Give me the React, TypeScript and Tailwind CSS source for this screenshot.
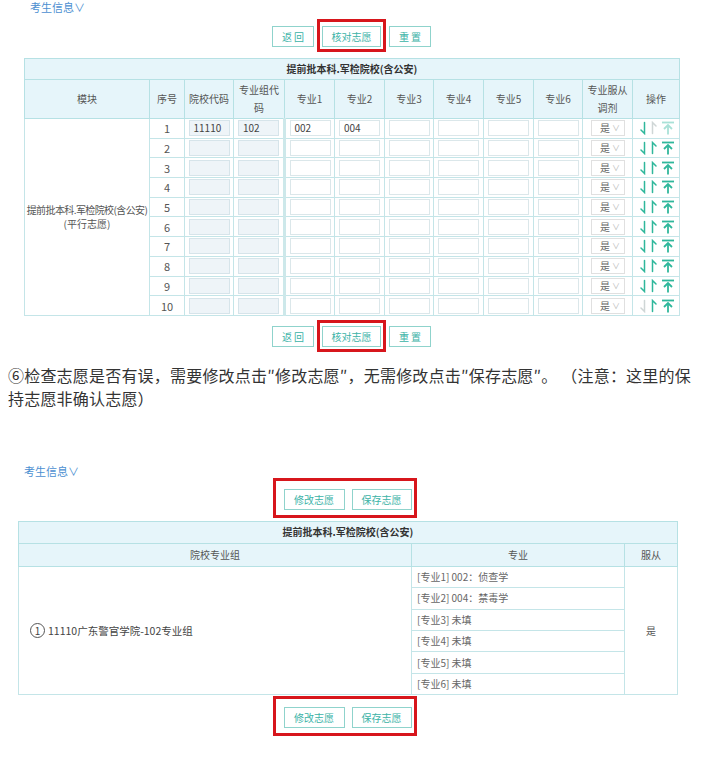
import React from "react";

const FONT = '"Noto Sans CJK SC", "Noto Sans", sans-serif';

function Btn({ w, children }: { w: string; children: React.ReactNode }) {
  return (
    <div
      className={`${w} h-[21px] border border-[#8fd3cc] bg-white text-[10px] leading-[19px] text-[#3bb3a7] text-center`}
    >
      {children}
    </div>
  );
}

function Highlight({ children, cls }: { children: React.ReactNode; cls: string }) {
  return (
    <div className="relative flex gap-[7px]">
      {children}
      <span className={`absolute ${cls} border-[3px] border-[#d7161c] pointer-events-none`} />
    </div>
  );
}

function DownIcon({ c }: { c: string }) {
  return (
    <svg width="8" height="14" viewBox="0 0 8 14" fill="none" stroke={c} strokeWidth="1.5" strokeLinecap="round">
      <path d="M5.5 1.5V12.5L2 9" />
    </svg>
  );
}

function UpIcon({ c }: { c: string }) {
  return (
    <svg width="8" height="14" viewBox="0 0 8 14" fill="none" stroke={c} strokeWidth="1.5" strokeLinecap="round">
      <path d="M2.5 12.5V1.5L6 5" />
    </svg>
  );
}

function TopIcon({ c }: { c: string }) {
  return (
    <svg width="14" height="14" viewBox="0 0 14 14" fill="none" stroke={c} strokeWidth="1.8">
      <path d="M1 1.5H13" />
      <path d="M7 13.5V4" />
      <path d="M3 8L7 4L11 8" />
    </svg>
  );
}

const GREEN = "#2fb79b";
const GREY = "#cfd6d6";
const PALE = "#a9e1d7";

function Box({ grey, value }: { grey?: boolean; value?: string }) {
  return (
    <div
      className={`mx-auto w-[41px] h-[16px] border ${
        grey ? "bg-[#eef4f8] border-[#d6e4ea]" : "bg-white border-[#dbe7ea]"
      } text-[10px] leading-[14px] text-[#444] pl-[4px] text-left`}
    >
      {value}
    </div>
  );
}

const TH = "border border-[#b6e1e4] text-[10px] text-[#555] font-normal leading-[18px]";
const TD = "border border-[#c4e5e8] p-0 align-middle";

function FirstTable() {
  const rows = Array.from({ length: 10 }, (_, i) => i + 1);
  const widths = [125, 35, 49, 51, 50, 50, 49, 50, 50, 49, 50, 47];
  return (
    <table className="table-fixed border-collapse w-[655px] border border-[#97d7d4]">
      <colgroup>
        {widths.map((w, i) => (
          <col key={i} style={{ width: w }} />
        ))}
      </colgroup>
      <thead>
        <tr className="h-[21px] bg-[#e6f5fa]">
          <th colSpan={12} className="border border-[#b6e1e4] text-[10px] leading-[14px] font-bold text-[#333]">
            提前批本科.军检院校(含公安)
          </th>
        </tr>
        <tr className="h-[39px] bg-[#e6f5fa]">
          <th className={TH}>模块</th>
          <th className={TH}>序号</th>
          <th className={TH}>院校代码</th>
          <th className={TH}>
            专业组代
            <br />码
          </th>
          {[1, 2, 3, 4, 5, 6].map((n) => (
            <th key={n} className={TH}>
              专业{n}
            </th>
          ))}
          <th className={TH}>
            专业服从
            <br />
            调剂
          </th>
          <th className={TH}>操作</th>
        </tr>
      </thead>
      <tbody>
        {rows.map((n) => (
          <tr key={n} className="h-[19.7px]">
            {n === 1 && (
              <td rowSpan={10} className={`${TD} text-center text-[10px] leading-[14px] text-[#555]`}>
                <div className="whitespace-nowrap tracking-[-0.6px]">提前批本科.军检院校(含公安)</div>
                <div>(平行志愿)</div>
              </td>
            )}
            <td className={`${TD} text-center text-[11px] leading-[14px] text-[#555]`}>{n}</td>
            <td className={TD}>
              <Box grey value={n === 1 ? "11110" : ""} />
            </td>
            <td className={`${TD} border-r-[3px] border-r-[#cde8ea]`}>
              <Box grey value={n === 1 ? "102" : ""} />
            </td>
            <td className={TD}>
              <Box value={n === 1 ? "002" : ""} />
            </td>
            <td className={TD}>
              <Box value={n === 1 ? "004" : ""} />
            </td>
            {[3, 4, 5, 6].map((k) => (
              <td key={k} className={TD}>
                <Box />
              </td>
            ))}
            <td className={TD}>
              <div className="ml-[8px] w-[34px] h-[16px] border border-[#e0e0e0] flex items-center pl-[8px] gap-[2px]">
                <span className="text-[10px] leading-[12px] text-[#666]">是</span>
                <span className="text-[8px] leading-[10px] text-[#bbb]">∨</span>
              </div>
            </td>
            <td className={TD}>
              <div className="flex items-center pl-[6px] gap-[3px]">
                <DownIcon c={n === 10 ? GREY : GREEN} />
                <UpIcon c={n === 1 ? GREY : GREEN} />
                <TopIcon c={n === 1 ? PALE : GREEN} />
              </div>
            </td>
          </tr>
        ))}
      </tbody>
    </table>
  );
}

function SecondTable() {
  const majors = [
    "[专业1] 002：侦查学",
    "[专业2] 004：禁毒学",
    "[专业3] 未填",
    "[专业4] 未填",
    "[专业5] 未填",
    "[专业6] 未填",
  ];
  return (
    <table className="table-fixed border-collapse w-[659px] border border-[#a5dcdb]">
      <colgroup>
        <col style={{ width: 393 }} />
        <col style={{ width: 213 }} />
        <col style={{ width: 53 }} />
      </colgroup>
      <thead>
        <tr className="h-[22px] bg-[#e6f5fa]">
          <th colSpan={3} className="border border-[#b6e1e4] text-[10px] leading-[14px] font-bold text-[#333]">
            提前批本科.军检院校(含公安)
          </th>
        </tr>
        <tr className="h-[23px] bg-[#e6f5fa]">
          <th className={TH}>院校专业组</th>
          <th className={TH}>专业</th>
          <th className={TH}>服从</th>
        </tr>
      </thead>
      <tbody>
        {majors.map((m, i) => (
          <tr key={i} className="h-[21.4px]">
            {i === 0 && (
              <td rowSpan={6} className={`${TD} pl-[11px]`}>
                <div className="flex items-center gap-[3px]">
                  <span className="w-[15px] h-[15px] rounded-full border border-[#555] text-[10px] leading-[13px] text-center text-[#444]">
                    1
                  </span>
                  <span className="text-[10.5px] text-[#444]">11110广东警官学院-102专业组</span>
                </div>
              </td>
            )}
            <td className={`${TD} pl-[5px] text-[10px] leading-[14px] text-[#666]`}>{m}</td>
            {i === 0 && (
              <td rowSpan={6} className={`${TD} text-center text-[10px] text-[#555]`}>
                是
              </td>
            )}
          </tr>
        ))}
      </tbody>
    </table>
  );
}

export default function App() {
  return (
    <div className="w-[724px] h-[764px] bg-white overflow-hidden" style={{ fontFamily: FONT }}>
      {/* first form */}
      <div className="h-[14px] pl-[30px] text-[11px] leading-[14px] text-[#4c8fd1]">考生信息∨</div>
      <div className="ml-[24px] w-[655px]">
        <div className="mt-[12px] flex justify-center gap-[8px]">
          <Btn w="w-[42px]">返 回</Btn>
          <Highlight cls="-left-[5px] -right-[5px] -top-[7px] -bottom-[5px]">
            <Btn w="w-[59px]">核对志愿</Btn>
          </Highlight>
          <Btn w="w-[42px]">重 置</Btn>
        </div>
        <div className="mt-[11px]">
          <FirstTable />
        </div>
        <div className="mt-[10px] flex justify-center gap-[8px]">
          <Btn w="w-[42px]">返 回</Btn>
          <Highlight cls="-left-[5px] -right-[5px] -top-[6px] -bottom-[5px]">
            <Btn w="w-[59px]">核对志愿</Btn>
          </Highlight>
          <Btn w="w-[42px]">重 置</Btn>
        </div>
      </div>

      {/* note */}
      <p className="mt-[17px] pl-[8px] text-[16px] leading-[23px] tracking-[0.2px] text-[#333] whitespace-nowrap">
        ⑥检查志愿是否有误，需要修改点击″修改志愿″，无需修改点击″保存志愿″。 （注意：这里的保
        <br />
        持志愿非确认志愿）
      </p>

      {/* second form */}
      <div className="mt-[55px] h-[12px] pl-[24px] text-[11px] leading-[12px] text-[#4c8fd1]">考生信息∨</div>
      <div className="ml-[18px] w-[659px]">
        <div className="mt-[12px] flex justify-center">
          <Highlight cls="-left-[11px] -right-[5px] -top-[11px] -bottom-[8px]">
            <Btn w="w-[61px]">修改志愿</Btn>
            <Btn w="w-[60px]">保存志愿</Btn>
          </Highlight>
        </div>
        <div className="mt-[11px]">
          <SecondTable />
        </div>
        <div className="mt-[12px] flex justify-center">
          <Highlight cls="-left-[11px] -right-[5px] -top-[11px] -bottom-[8px]">
            <Btn w="w-[61px]">修改志愿</Btn>
            <Btn w="w-[60px]">保存志愿</Btn>
          </Highlight>
        </div>
      </div>
    </div>
  );
}
